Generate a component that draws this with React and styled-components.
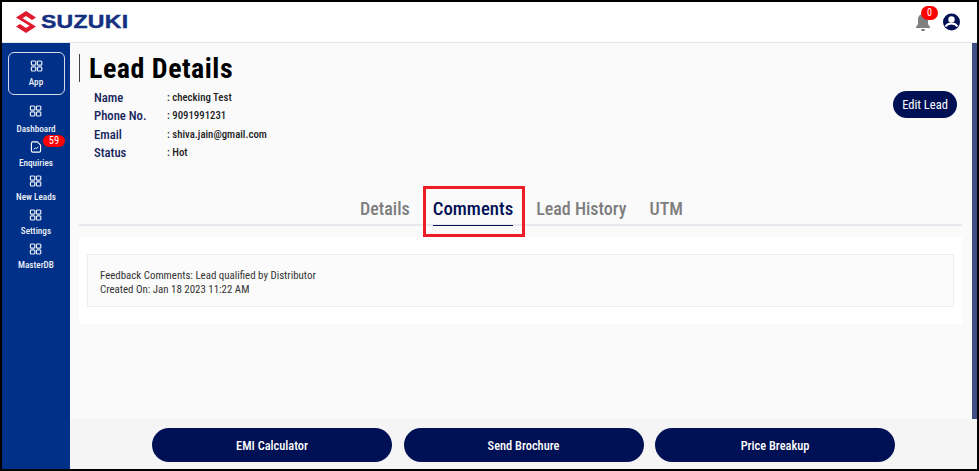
import styled, { createGlobalStyle } from 'styled-components';

const GlobalStyle = createGlobalStyle`
  html, body {
    margin: 0;
    padding: 0;
    background: #fff;
    font-family: 'Roboto', 'Liberation Sans', sans-serif;
    font-stretch: 75%;
  }
  * { box-sizing: border-box; }
`;

const GridIcon = () => (
  <svg width="13" height="12" viewBox="0 0 13 12" fill="none" stroke="#e8edf8" strokeWidth="1.2">
    <rect x="1.400" y="1" width="4.400" height="4.200" rx="1" />
    <rect x="7.400" y="1" width="4.400" height="4.200" rx="1" />
    <rect x="1.400" y="6.800" width="4.400" height="4.200" rx="1" />
    <rect x="7.400" y="6.800" width="4.400" height="4.200" rx="1" />
  </svg>
);

const DocIcon = () => (
  <svg width="12" height="12" viewBox="0 0 12 13" fill="none" stroke="#fff" strokeWidth="1.2">
    <path d="M2.500 1H7.500L11 4.500V10.500A1.500 1.500 0 0 1 9.500 12H2.500A1.500 1.500 0 0 1 1 10.500V2.500A1.500 1.500 0 0 1 2.500 1z" />
    <path d="M3.500 9L5.200 7.500 6.200 8.300 8.500 6.500" strokeWidth="1" />
  </svg>
);

const Logo = () => (
  <svg width="22" height="22" viewBox="0 0 22 22">
    <path
      fill="#e1192e"
      d="M11 0L21 6.500 17 9 11 5 7.500 7.300 21 15.500 11 22 1 15.500 5 13 11 17 14.500 14.700 1 6.500z"
    />
  </svg>
);

const navItems = [
  { label: 'Dashboard' },
  { label: 'Enquiries', doc: true, badge: 59 },
  { label: 'New Leads' },
  { label: 'Settings' },
  { label: 'MasterDB' },
];

const details = [
  ['Name', 'checking Test'],
  ['Phone No.', '9091991231'],
  ['Email', 'shiva.jain@gmail.com'],
  ['Status', 'Hot'],
];

const tabs = ['Details', 'Comments', 'Lead History', 'UTM'];

export default function App() {
  return (
    <>
      <GlobalStyle />
      <Frame>
        <Header>
          <Brand>
            <Logo />
            <BrandName>SUZUKI</BrandName>
          </Brand>
          <HeaderIcons>
            <Bell>
              <svg width="16" height="19" viewBox="0 0 16 19" fill="#7f8080">
                <path d="M8 1c3 0 5 2.400 5 5.500V11l2 3v1H1v-1l2-3V6.500C3 3.400 5 1 8 1z" />
                <rect x="6" y="16" width="4" height="2" rx="1" />
              </svg>
              <BellBadge>0</BellBadge>
            </Bell>
            <svg width="17" height="18" viewBox="0 0 17 18">
              <circle cx="8.500" cy="9" r="8.500" fill="#001055" />
              <circle cx="8.500" cy="6.500" r="3.200" fill="#fff" />
              <path d="M2.500 13.500c1.500-2.400 3.500-3 6-3s4.500.6 6 3" fill="none" stroke="#fff" strokeWidth="1.800" />
            </svg>
          </HeaderIcons>
        </Header>
        <Body>
          <Sidebar>
            <ActiveNav>
              <GridIcon />
              <NavLabel>App</NavLabel>
            </ActiveNav>
            <NavList>
              {navItems.map((item) => (
                <NavItem key={item.label}>
                  {item.doc ? <DocIcon /> : <GridIcon />}
                  <NavLabel>{item.label}</NavLabel>
                  {item.badge && <NavBadge>{item.badge}</NavBadge>}
                </NavItem>
              ))}
            </NavList>
          </Sidebar>
          <Main>
            <UpperArea>
              <Content>
                <TopRow>
                  <div>
                    <Title>Lead Details</Title>
                    <InfoList>
                      {details.map(([key, value]) => (
                        <InfoRow key={key}>
                          <InfoKey>{key}</InfoKey>
                          <InfoValue>: {value}</InfoValue>
                        </InfoRow>
                      ))}
                    </InfoList>
                  </div>
                  <EditButton>Edit Lead</EditButton>
                </TopRow>
                <TabBar>
                  {tabs.map((tab) => (
                    <Tab key={tab} $active={tab === 'Comments'}>
                      {tab}
                    </Tab>
                  ))}
                  <Highlight />
                </TabBar>
                <CommentPanel>
                  <CommentBox>
                    <div>Feedback Comments: Lead qualified by Distributor</div>
                    <div>Created On: Jan 18 2023 11:22 AM</div>
                  </CommentBox>
                </CommentPanel>
              </Content>
              <Scrollbar />
            </UpperArea>
            <Footer>
              <FooterButton>EMI Calculator</FooterButton>
              <FooterButton>Send Brochure</FooterButton>
              <FooterButton>Price Breakup</FooterButton>
            </Footer>
          </Main>
        </Body>
      </Frame>
    </>
  );
}

const Frame = styled.div`
  width: 979px;
  height: 471px;
  border: 2px solid #000;
  display: flex;
  flex-direction: column;
  overflow: hidden;
`;

const Header = styled.header`
  height: 40px;
  flex: none;
  display: flex;
  align-items: center;
  justify-content: space-between;
  padding: 0 17px 0 13px;
  background: #fff;
`;

const Brand = styled.div`
  display: flex;
  align-items: center;
  gap: 4px;
`;

const BrandName = styled.span`
  font-family: 'Liberation Sans', sans-serif;
  font-stretch: 100%;
  font-weight: 700;
  font-size: 18px;
  line-height: 18px;
  letter-spacing: 0.2px;
  color: #15307f;
  -webkit-text-stroke: 0.4px #15307f;
  transform: scaleX(1.28);
  transform-origin: left center;
`;

const HeaderIcons = styled.div`
  display: flex;
  align-items: center;
  gap: 12px;
`;

const Bell = styled.div`
  position: relative;
  display: flex;
`;

const BellBadge = styled.span`
  position: absolute;
  top: -7px;
  left: 6px;
  width: 17px;
  height: 14px;
  border-radius: 8px;
  background: #f00;
  color: #fff;
  font-size: 10px;
  line-height: 14px;
  text-align: center;
`;

const Body = styled.div`
  flex: 1;
  display: flex;
  min-height: 0;
  border-top: 1px solid #e4e4ea;
`;

const Sidebar = styled.nav`
  width: 68px;
  flex: none;
  display: flex;
  flex-direction: column;
  align-items: center;
  background: #003087;
  padding-top: 9px;
`;

const ActiveNav = styled.div`
  width: 57px;
  height: 43px;
  display: flex;
  flex-direction: column;
  align-items: center;
  justify-content: center;
  gap: 4px;
  border: 1.500px solid #d5dcec;
  border-radius: 6px;
`;

const NavList = styled.div`
  display: flex;
  flex-direction: column;
  align-items: center;
  margin-top: 10px;
  gap: 7px;
`;

const NavItem = styled.div`
  position: relative;
  display: flex;
  flex-direction: column;
  align-items: center;
  gap: 4px;

  &:first-child {
    gap: 6px;
  }
`;

const NavLabel = styled.span`
  color: #eef1f8;
  font-size: 9.200px;
  line-height: 11px;
  font-weight: 500;
`;

const NavBadge = styled.span`
  position: absolute;
  top: -6px;
  right: -12px;
  width: 22px;
  height: 12px;
  border-radius: 6px;
  background: #f00;
  color: #fff;
  font-size: 10.500px;
  line-height: 12px;
  text-align: center;
`;

const Main = styled.main`
  flex: 1;
  min-width: 0;
  display: flex;
  flex-direction: column;
  background: #fafafb;
`;

const UpperArea = styled.div`
  flex: 1;
  min-height: 0;
  display: flex;
`;

const Content = styled.div`
  flex: 1;
  min-width: 0;
  padding: 11px 0 0 9px;
`;

const Scrollbar = styled.div`
  width: 5px;
  flex: none;
  background: #3e4f85;
`;

const TopRow = styled.div`
  display: flex;
  justify-content: space-between;
  align-items: flex-start;
  padding-right: 15px;
`;

const Title = styled.h1`
  margin: 0;
  padding-left: 9px;
  height: 28px;
  border-left: 1px solid #444;
  color: #000;
  font-size: 28px;
  font-weight: 700;
  line-height: 29px;
  letter-spacing: 0.5px;
`;

const InfoList = styled.div`
  margin: 6px 0 0 15px;
`;

const InfoRow = styled.div`
  display: flex;
  height: 18.500px;
  align-items: center;
`;

const InfoKey = styled.span`
  width: 73px;
  color: #14235a;
  font-size: 12.700px;
  font-weight: 500;
`;

const InfoValue = styled.span`
  color: #222;
  font-size: 10.800px;
  font-weight: 500;
`;

const EditButton = styled.button`
  margin-top: 37px;
  width: 64px;
  height: 27px;
  padding: 0;
  border: 0;
  border-radius: 14px;
  background: #001055;
  color: #fff;
  font-family: inherit;
  font-stretch: 75%;
  font-size: 12.500px;
`;

const TabBar = styled.div`
  position: relative;
  height: 43px;
  margin: 21px 10px 0 0;
  display: flex;
  justify-content: center;
  align-items: flex-start;
  gap: 23px;
  padding: 14px 0 0 2px;
  border-bottom: 2px solid #e8e8ef;
`;

const Tab = styled.div`
  color: ${(p) => (p.$active ? '#001055' : '#7d7d7d')};
  font-size: ${(p) => (p.$active ? '18.800px' : '18px')};
  font-weight: 500;
  height: 28.500px;
  line-height: 24px;
  border-bottom: ${(p) => (p.$active ? '1.500px solid #001055' : '0')};
`;

const Highlight = styled.div`
  position: absolute;
  left: 344px;
  top: 3px;
  width: 102px;
  height: 51px;
  border: 3px solid #ee1c25;
`;

const CommentPanel = styled.section`
  margin-top: 11px;
  margin-right: 10px;
  height: 87px;
  padding: 17px 8px;
  background: #fff;
`;

const CommentBox = styled.div`
  height: 53px;
  padding: 14px 12px 0;
  background: #fbfbfb;
  border: 1px solid #eee;
  color: #333;
  font-size: 10.900px;
  line-height: 14px;
`;

const Footer = styled.footer`
  height: 50px;
  flex: none;
  display: flex;
  justify-content: center;
  gap: 11.500px;
  padding-top: 9px;
  background: #f5f5f5;
`;

const FooterButton = styled.button`
  width: 240px;
  height: 34px;
  padding: 0;
  border: 0;
  border-radius: 17px;
  background: #001055;
  color: #fff;
  font-family: inherit;
  font-stretch: 75%;
  font-size: 12.400px;
  font-weight: 500;
`;
